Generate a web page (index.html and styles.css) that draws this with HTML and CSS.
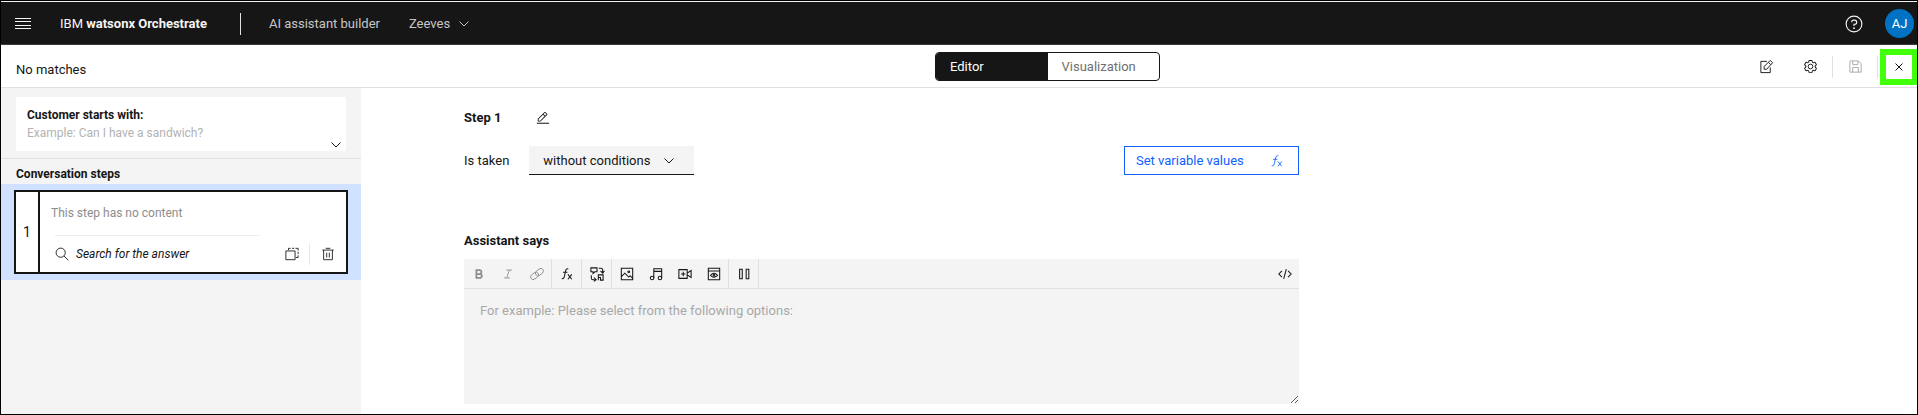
FILE: index.html
```html
<!DOCTYPE html>
<html lang="en">
<head>
<meta charset="utf-8">
<title>IBM watsonx Orchestrate</title>
<link rel="stylesheet" href="styles.css">
</head>
<body>
<header class="topbar">
  <button class="icon-btn menu-btn" aria-label="Menu">
    <svg class="icon" viewBox="0 0 16 14"><path d="M0 1.500h16M0 4.500h16M0 8.500h16M0 11.500h16"/></svg>
  </button>
  <a class="brand" href="#">IBM <strong>watsonx Orchestrate</strong></a>
  <span class="topbar-rule"></span>
  <a class="topbar-link" href="#">AI assistant builder</a>
  <button class="assistant-switch">Zeeves
    <svg class="chevron" viewBox="0 0 10 6"><path d="M.5.5 5 5 9.500.5"/></svg>
  </button>
  <div class="topbar-end">
    <button class="icon-btn help-btn" aria-label="Help">
      <svg class="icon" viewBox="0 0 32 32"><circle cx="16" cy="16" r="14"/><path d="M12 13v-.5A3.500 3.500 0 0 1 15.500 9h1.500a3.500 3.500 0 0 1 0 7.500H16V19.500"/><circle class="solid" cx="16" cy="23.500" r="1.600"/></svg>
    </button>
    <button class="avatar">AJ</button>
  </div>
</header>

<div class="subbar">
  <p class="status">No matches</p>
  <div class="switcher" role="tablist">
    <button class="switch-tab selected" role="tab" aria-selected="true">Editor</button>
    <button class="switch-tab" role="tab" aria-selected="false">Visualization</button>
  </div>
  <div class="actions">
    <button class="icon-btn action" aria-label="Customize">
      <svg class="icon" viewBox="0 0 32 32"><path d="M17 5H4v24h20V18M11 22v-6L24 3l5 5-13 14zM20 7l5 5"/></svg>
    </button>
    <button class="icon-btn action" aria-label="Settings">
      <svg class="icon" viewBox="0 0 32 32"><path class="shape" d="M27 16.760v-1.530l1.920-1.680A2 2 0 0 0 29.300 11l-2.360-4a2 2 0 0 0-1.730-1 2 2 0 0 0-.64.1l-2.430.82a11.350 11.350 0 0 0-1.310-.75l-.51-2.520a2 2 0 0 0-2-1.610h-4.680a2 2 0 0 0-2 1.610l-.51 2.520a11.480 11.480 0 0 0-1.320.75l-2.380-.86A2 2 0 0 0 6.790 6a2 2 0 0 0-1.730 1L2.700 11a2 2 0 0 0 .41 2.510L5 15.240v1.530l-1.890 1.680A2 2 0 0 0 2.700 21l2.360 4a2 2 0 0 0 1.730 1 2 2 0 0 0 .64-.1l2.430-.82a11.350 11.350 0 0 0 1.310.75l.51 2.520a2 2 0 0 0 2 1.610h4.720a2 2 0 0 0 2-1.610l.51-2.520a11.480 11.480 0 0 0 1.320-.75l2.420.82a2 2 0 0 0 .64.1 2 2 0 0 0 1.730-1l2.280-4a2 2 0 0 0-.41-2.510zM25.210 24l-3.430-1.160a8.860 8.860 0 0 1-2.710 1.570L18.360 28h-4.720l-.71-3.550a9.360 9.360 0 0 1-2.700-1.570L6.790 24l-2.360-4 2.720-2.400a8.900 8.900 0 0 1 0-3.130L4.430 12l2.360-4 3.430 1.160a8.860 8.860 0 0 1 2.710-1.570L13.640 4h4.720l.71 3.550a9.360 9.360 0 0 1 2.700 1.570L25.210 8l2.360 4-2.720 2.400a8.900 8.900 0 0 1 0 3.130L27.570 20z"/><circle cx="16" cy="16" r="5"/></svg>
    </button>
    <span class="action-rule"></span>
    <button class="icon-btn action" aria-label="Save" disabled>
      <svg class="icon" viewBox="0 0 32 32"><path d="M5 4h17l6 6v18H4V5zM10 4v8h11V4M10 28V18h12v10"/></svg>
    </button>
    <span class="action-rule"></span>
    <button class="icon-btn close-btn" aria-label="Close">
      <svg class="close-icon" viewBox="0 0 8 8"><path d="m.5.5 7 7m0-7-7 7"/></svg>
    </button>
  </div>
</div>

<div class="workspace">
  <aside class="sidebar">
    <section class="starter">
      <button class="starter-card">
        <strong>Customer starts with:</strong>
        <span class="hint">Example: Can I have a sandwich?</span>
        <svg class="chevron" viewBox="0 0 10 6"><path d="M.5.5 5 5 9.500.5"/></svg>
      </button>
    </section>
    <h2 class="list-title">Conversation steps</h2>
    <div class="step-row">
      <article class="step-card">
        <span class="step-number">1</span>
        <div class="step-body">
          <p class="step-summary">This step has no content</p>
          <div class="step-foot">
            <svg class="icon search-icon" viewBox="0 0 32 32"><circle cx="13" cy="13" r="10.500"/><path d="m20.500 20.500 10 10"/></svg>
            <em>Search for the answer</em>
            <button class="icon-btn copy-btn" aria-label="Duplicate step">
              <svg class="icon" viewBox="0 0 32 32"><path d="M2 9h21v20H2zM8 7V3h5M16 3h5M24 3h6v5M30 11v5M30 19v5h-5"/></svg>
            </button>
            <button class="icon-btn delete-btn" aria-label="Delete step">
              <svg class="icon" viewBox="0 0 32 32"><path d="M3 7h26M6 7v22h20V7M11 3h10M13 13v11M19 13v11"/></svg>
            </button>
          </div>
        </div>
      </article>
    </div>
  </aside>

  <main class="editor">
    <div class="editor-column">
      <div class="step-heading">
        <h1>Step 1</h1>
        <button class="icon-btn" aria-label="Rename step">
          <svg class="icon" viewBox="0 0 32 32"><path class="shape" d="M2 27h28v2H2zM25.400 9c.8-.8.8-2 0-2.800l-3.600-3.600c-.8-.8-2-.8-2.800 0l-15 15V24h6.400l15-15zm-5-5L24 7.600l-3 3L17.400 7l3-3zM6 22v-3.600l10-10 3.600 3.600-10 10H6z"/></svg>
        </button>
      </div>
      <div class="condition-row">
        <label for="condition">Is taken</label>
        <div class="select-wrap">
          <select id="condition"><option>without conditions</option></select>
          <svg class="chevron" viewBox="0 0 10 6"><path d="M.5.5 5 5 9.500.5"/></svg>
        </div>
        <button class="variables-btn">Set variable values
          <svg class="icon" viewBox="0 0 32 32"><path d="M19 4h-2q-3 0-4 4l-3 14q-1 5-5 5H4M7 12h10M18 17l9 11M27 17l-9 11"/></svg>
        </button>
      </div>
      <label class="says-label" for="says">Assistant says</label>
      <div class="rich-text">
        <div class="toolbar">
          <div class="tool-group muted">
            <button class="icon-btn" aria-label="Bold"><svg class="icon bold-icon" viewBox="0 0 32 32"><path d="M10 7h7a4.500 4.500 0 0 1 0 9h-7zM10 16h8a4.500 4.500 0 0 1 0 9h-8z"/></svg></button>
            <button class="icon-btn" aria-label="Italic"><svg class="icon" viewBox="0 0 32 32"><path d="M12 7h13M7 25h13M19 7l-6 18"/></svg></button>
            <button class="icon-btn" aria-label="Link"><svg class="icon" viewBox="0 0 32 32"><g transform="rotate(-38 16 16)"><rect x="-1" y="10" width="20" height="12" rx="6"/><rect x="13" y="10" width="20" height="12" rx="6"/></g></svg></button>
          </div>
          <div class="tool-group">
            <button class="icon-btn" aria-label="Insert variable"><svg class="icon strong" viewBox="0 0 32 32"><path d="M19 4h-2q-3 0-4 4l-3 14q-1 5-5 5H4M7 12h10M18 17l9 11M27 17l-9 11"/></svg></button>
          </div>
          <div class="tool-group">
            <button class="icon-btn" aria-label="Response type"><svg class="icon strong" viewBox="0 0 32 32"><path d="M2 2h14v9h-5l-4 4v-4H2zM20 3h5q4 0 4 4v6m-5-4 5 5 4-5M3 19v6q0 4 4 4h6m-4-5 5 5-5 4M19 30V18h11v12h-6v-6h-5"/></svg></button>
          </div>
          <div class="tool-group">
            <button class="icon-btn" aria-label="Image"><svg class="icon strong" viewBox="0 0 32 32"><path d="M3 3h26v26H3zM3 22l8-8 9 9 3-3 6 6"/><circle cx="20" cy="11" r="2"/></svg></button>
            <button class="icon-btn" aria-label="Audio"><svg class="icon strong" viewBox="0 0 32 32"><path d="M11 25V4h18v21M11 10h18"/><circle cx="7" cy="25" r="4"/><circle cx="25" cy="25" r="4"/></svg></button>
            <button class="icon-btn" aria-label="Video"><svg class="icon strong" viewBox="0 0 32 32"><path d="M2 6h19v20H2zM21 14l9-6v16l-9-6M12 11v10M7 16h10"/></svg></button>
            <button class="icon-btn" aria-label="Embedded page"><svg class="icon strong" viewBox="0 0 32 32"><path d="M3 3h26v26H3zM3 9h26M8 19q8-9 16 0-8 9-16 0z"/><circle cx="16" cy="19" r="2"/></svg></button>
          </div>
          <div class="tool-group">
            <button class="icon-btn" aria-label="Pause"><svg class="icon strong" viewBox="0 0 32 32"><path d="M6 5h6v22H6zM21 5h6v22h-6z"/></svg></button>
          </div>
          <button class="icon-btn code-btn" aria-label="Edit source"><svg class="icon strong" viewBox="0 0 32 32"><path d="m9 9-7 7 7 7M23 9l7 7-7 7M19 5l-6 22"/></svg></button>
        </div>
        <textarea id="says" placeholder="For example: Please select from the following options:"></textarea>
      </div>
    </div>
  </main>
</div>
</body>
</html>
```
FILE: styles.css
```css
* {
  box-sizing: border-box;
}

body {
  margin: 0;
  min-height: 100vh;
  display: flex;
  flex-direction: column;
  border: 1px solid #000;
  background: #fff;
  color: #161616;
  font: 13px/18px Roboto, "Liberation Sans", sans-serif;
}

h1, h2, p {
  margin: 0;
  font-size: 13px;
}

button, select, textarea {
  margin: 0;
  padding: 0;
  border: 0;
  border-radius: 0;
  background: none;
  color: inherit;
  font: inherit;
}

a {
  color: inherit;
  text-decoration: none;
}

svg {
  display: block;
  flex: none;
  fill: none;
  stroke: currentColor;
}

.icon {
  width: 14px;
  height: 14px;
  stroke-width: 2;
  overflow: visible;
}

.icon.strong {
  stroke-width: 2.4;
}

.shape, .solid {
  fill: currentColor;
  stroke: none;
}

.chevron {
  width: 10px;
  height: 6px;
}

.icon-btn {
  display: grid;
  place-items: center;
  flex: none;
}

/* Top bar */

.topbar {
  display: flex;
  align-items: center;
  height: 44px;
  padding: 1px 3px 0 14px;
  border-top: 1px solid #f4f4f4;
  border-bottom: 1px solid #393939;
  background: #161616;
  color: #f4f4f4;
}

.menu-btn .icon {
  width: 16px;
  stroke-width: 1;
}

.brand {
  margin-left: 29px;
}

.brand strong {
  font-weight: 700;
}

.topbar-rule {
  width: 1px;
  height: 22px;
  margin: 0 28px 0 33px;
  background: #e0e0e0;
}

.topbar-link, .assistant-switch {
  color: #c6c6c6;
}

.assistant-switch {
  display: flex;
  align-items: center;
  gap: 9px;
  margin-left: 29px;
}

.topbar-end {
  display: flex;
  align-items: center;
  gap: 22px;
  margin-left: auto;
}

.help-btn .icon {
  width: 18px;
  height: 18px;
}

.avatar {
  width: 29px;
  height: 29px;
  border-radius: 50%;
  background: #0072c3;
  color: #fff;
}

/* Sub bar */

.subbar {
  display: grid;
  grid-template-columns: 934px 225px 1fr;
  align-items: center;
  height: 43px;
  border-bottom: 1px solid #e0e0e0;
}

.status {
  padding: 7px 0 0 15px;
}

.switcher {
  display: flex;
  height: 29px;
  border: 1px solid #161616;
  border-radius: 4px;
  overflow: hidden;
}

.switch-tab {
  flex: 1;
  padding: 2px 0 0 14px;
  color: #6f6f6f;
  text-align: left;
}

.switch-tab.selected {
  background: #161616;
  color: #fff;
}

.actions {
  display: flex;
  align-items: center;
  justify-content: flex-end;
  padding-top: 1px;
}

.action {
  width: 44px;
  height: 36px;
}

.action .icon {
  width: 15px;
  height: 15px;
}

.action:disabled {
  color: #a8a8a8;
}

.action-rule {
  width: 1px;
  height: 22px;
  background: #e0e0e0;
}

.close-btn {
  width: 38px;
  height: 36px;
  margin: 0 -1px 0 2px;
  border: 6px solid #42ff0a;
}

.close-icon {
  width: 8px;
  height: 8px;
}

/* Sidebar */

.workspace {
  display: flex;
  flex: 1;
}

.sidebar {
  flex: 0 0 360px;
  background: #f4f4f4;
  font-size: 12px;
}

.starter {
  padding: 9px 15px 7px;
  border-bottom: 1px solid #e0e0e0;
}

.starter-card {
  position: relative;
  display: flex;
  flex-direction: column;
  width: 100%;
  padding: 9px 11px;
  background: #fff;
  text-align: left;
}

.starter-card .chevron {
  position: absolute;
  right: 5px;
  bottom: 3px;
}

.hint {
  color: #b3b3b3;
}

.list-title {
  padding: 6px 15px 1px;
  font-size: 12px;
}

.step-row {
  padding: 6px 13px;
  background: #d0e2ff;
}

.step-card {
  display: flex;
  border: 2px solid #161616;
  background: #fff;
}

.step-number {
  display: grid;
  place-items: center;
  width: 24px;
  border-right: 2px solid #161616;
  font-size: 14px;
}

.step-body {
  flex: 1;
  padding: 12px 0 7px 11px;
}

.step-summary {
  color: #8d8d8d;
  font-size: 12px;
}

.step-summary::after {
  content: "";
  display: block;
  width: 205px;
  height: 1px;
  margin: 13px 4px 7px;
  background: #eee;
}

.step-foot {
  display: flex;
  align-items: center;
}

.search-icon {
  margin: 0 7px 0 4px;
}

.copy-btn {
  width: 36px;
  height: 22px;
  margin-left: auto;
  border-right: 1px solid #e8e8e8;
}

.delete-btn {
  width: 36px;
  height: 22px;
}

/* Editor */

.editor {
  flex: 1;
  padding: 21px 24px 10px 103px;
}

.editor-column {
  max-width: 835px;
}

.step-heading {
  display: flex;
  align-items: center;
  gap: 35px;
}

.condition-row {
  display: flex;
  align-items: center;
  margin-top: 19px;
}

.select-wrap {
  position: relative;
  width: 165px;
  margin-left: 20px;
}

.select-wrap select {
  appearance: none;
  display: block;
  width: 100%;
  height: 29px;
  padding: 1px 0 0 14px;
  border-bottom: 1px solid #161616;
  background: #f4f4f4;
}

.select-wrap .chevron {
  position: absolute;
  top: 12px;
  right: 20px;
  pointer-events: none;
}

.variables-btn {
  display: flex;
  align-items: center;
  justify-content: space-between;
  width: 175px;
  height: 29px;
  margin-left: auto;
  padding: 0 14px 0 11px;
  border: 1px solid #0f62fe;
  color: #0f62fe;
}

.says-label {
  display: block;
  margin: 57px 0 9px;
  font-weight: 700;
}

.rich-text {
  background: #f4f4f4;
}

.toolbar {
  display: flex;
  height: 30px;
  border-bottom: 1px solid #e0e0e0;
}

.tool-group {
  display: flex;
  border-right: 1px solid #e0e0e0;
}

.tool-group .icon-btn {
  width: 29px;
}

.muted {
  color: #8d8d8d;
}

.bold-icon {
  stroke-width: 4;
}

.code-btn {
  width: 29px;
  margin-left: auto;
}

textarea {
  display: block;
  width: 100%;
  height: 115px;
  padding: 13px 16px;
  resize: both;
}

textarea::placeholder {
  color: #a8a8a8;
}
```
